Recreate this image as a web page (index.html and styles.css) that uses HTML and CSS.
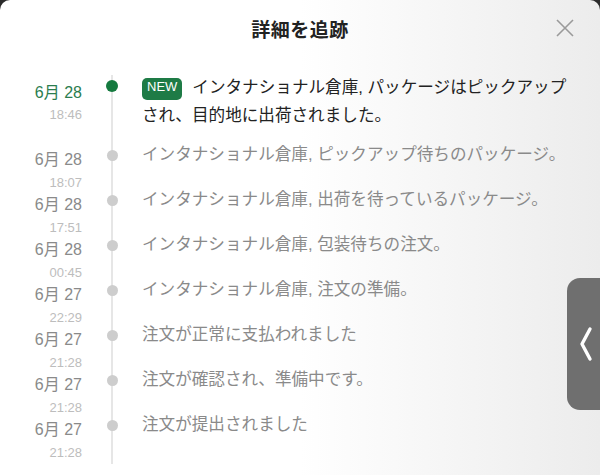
FILE: index.html
```html
<!DOCTYPE html>
<html lang="ja">
<head>
    <meta charset="UTF-8">
    <meta name="viewport" content="width=device-width, initial-scale=1.0">
    <title>詳細を追跡</title>
    <link rel="stylesheet" href="styles.css">
</head>
<body>
    <div class="sheet">
        <header class="sheet-header">
            <h1>詳細を追跡</h1>
            <button class="close-btn" aria-label="閉じる">
                <svg width="20" height="20" viewBox="0 0 20 20">
                    <path d="M2 2 L18 18 M18 2 L2 18" stroke="#9a9a9a" stroke-width="1.6" fill="none"/>
                </svg>
            </button>
        </header>

        <ul class="timeline">
            <li class="event current">
                <div class="when">
                    <div class="date">6月 28</div>
                    <div class="time">18:46</div>
                </div>
                <div class="marker"><span class="dot"></span></div>
                <div class="what"><span class="badge">NEW</span>インタナショナル倉庫, パッケージはピックアップされ、目的地に出荷されました。</div>
            </li>
            <li class="event">
                <div class="when">
                    <div class="date">6月 28</div>
                    <div class="time">18:07</div>
                </div>
                <div class="marker"><span class="dot"></span></div>
                <div class="what">インタナショナル倉庫, ピックアップ待ちのパッケージ。</div>
            </li>
            <li class="event">
                <div class="when">
                    <div class="date">6月 28</div>
                    <div class="time">17:51</div>
                </div>
                <div class="marker"><span class="dot"></span></div>
                <div class="what">インタナショナル倉庫, 出荷を待っているパッケージ。</div>
            </li>
            <li class="event">
                <div class="when">
                    <div class="date">6月 28</div>
                    <div class="time">00:45</div>
                </div>
                <div class="marker"><span class="dot"></span></div>
                <div class="what">インタナショナル倉庫, 包装待ちの注文。</div>
            </li>
            <li class="event">
                <div class="when">
                    <div class="date">6月 27</div>
                    <div class="time">22:29</div>
                </div>
                <div class="marker"><span class="dot"></span></div>
                <div class="what">インタナショナル倉庫, 注文の準備。</div>
            </li>
            <li class="event">
                <div class="when">
                    <div class="date">6月 27</div>
                    <div class="time">21:28</div>
                </div>
                <div class="marker"><span class="dot"></span></div>
                <div class="what">注文が正常に支払われました</div>
            </li>
            <li class="event">
                <div class="when">
                    <div class="date">6月 27</div>
                    <div class="time">21:28</div>
                </div>
                <div class="marker"><span class="dot"></span></div>
                <div class="what">注文が確認され、準備中です。</div>
            </li>
            <li class="event last">
                <div class="when">
                    <div class="date">6月 27</div>
                    <div class="time">21:28</div>
                </div>
                <div class="marker"><span class="dot"></span></div>
                <div class="what">注文が提出されました</div>
            </li>
        </ul>

        <!-- 横のスライドタブ -->
        <button class="side-tab" aria-label="戻る">
            <svg width="14" height="38" viewBox="0 0 14 38">
                <path d="M11 4 L3 19 L11 34" stroke="#fff" stroke-width="3.4" fill="none" stroke-linecap="round" stroke-linejoin="round"/>
            </svg>
        </button>
    </div>
</body>
</html>
```

FILE: styles.css
```css
body {
    margin: 0;
    padding: 0;
    background: #2b2b2b;
    font-family: 'Liberation Sans', 'Noto Sans CJK JP', sans-serif;
}

.sheet {
    position: relative;
    width: 600px;
    height: 475px;
    overflow: hidden;
    border-radius: 10px 10px 0 0;
    background: linear-gradient(to right, #ffffff 0%, #ffffff 50%, #ececec 100%);
}

.sheet-header {
    display: flex;
    align-items: center;
    justify-content: center;
    position: relative;
    height: 56px;
}

.sheet-header h1 {
    margin: 0;
    font-size: 19px;
    font-weight: bold;
    color: #222;
    letter-spacing: 0.5px;
}

.close-btn {
    position: absolute;
    top: 18px;
    right: 25px;
    padding: 0;
    border: none;
    background: none;
    display: flex;
}

.timeline {
    list-style: none;
    margin: 0;
    padding: 16px 0 0 0;
}

.event {
    display: grid;
    grid-template-columns: 82px 60px 1fr;
    min-height: 45px;
}

.event.current {
    min-height: 69px;
}

.when {
    text-align: right;
    padding-top: 9px;
    margin-bottom: -8px;
}

.date {
    font-size: 16px;
    line-height: 20px;
    color: #8a8a8a;
}

.time {
    margin-top: 6px;
    font-size: 13px;
    line-height: 14px;
    color: #bdbdbd;
}

.current .date {
    color: #2b7d4f;
}

.current .when {
    padding-top: 11px;
}

.current .time {
    margin-top: 5px;
}

.marker {
    position: relative;
    display: flex;
    justify-content: center;
}

.marker::before {
    content: '';
    position: absolute;
    top: 0;
    bottom: 0;
    left: 29px;
    width: 2px;
    background: #e6e6e6;
}

.current .marker::before {
    top: 3px;
}

.last .marker::before {
    bottom: -8px;
}

.dot {
    position: relative;
    margin-top: 9px;
    width: 11px;
    height: 11px;
    border-radius: 50%;
    background: #cdcdcd;
}

.current .dot {
    margin-top: 8px;
    width: 12px;
    height: 12px;
    background: #157a3f;
}

.what {
    font-size: 16.6px;
    line-height: 28px;
    color: #8a8a8a;
    padding-right: 20px;
}

.current .what {
    color: #222;
    padding-top: 2px;
    padding-right: 22px;
}

.badge {
    display: inline-block;
    vertical-align: top;
    margin: 4px 10px 0 0;
    padding: 0 5px;
    height: 22px;
    line-height: 18px;
    font-size: 13px;
    color: #fff;
    background: #1e7b46;
    border-radius: 5px;
}

.side-tab {
    position: absolute;
    top: 278px;
    right: 0;
    width: 33px;
    height: 132px;
    padding: 0 0 0 4px;
    border: none;
    border-radius: 13px 0 0 13px;
    background: #6f6f6f;
    display: flex;
    align-items: center;
    justify-content: center;
}
```
